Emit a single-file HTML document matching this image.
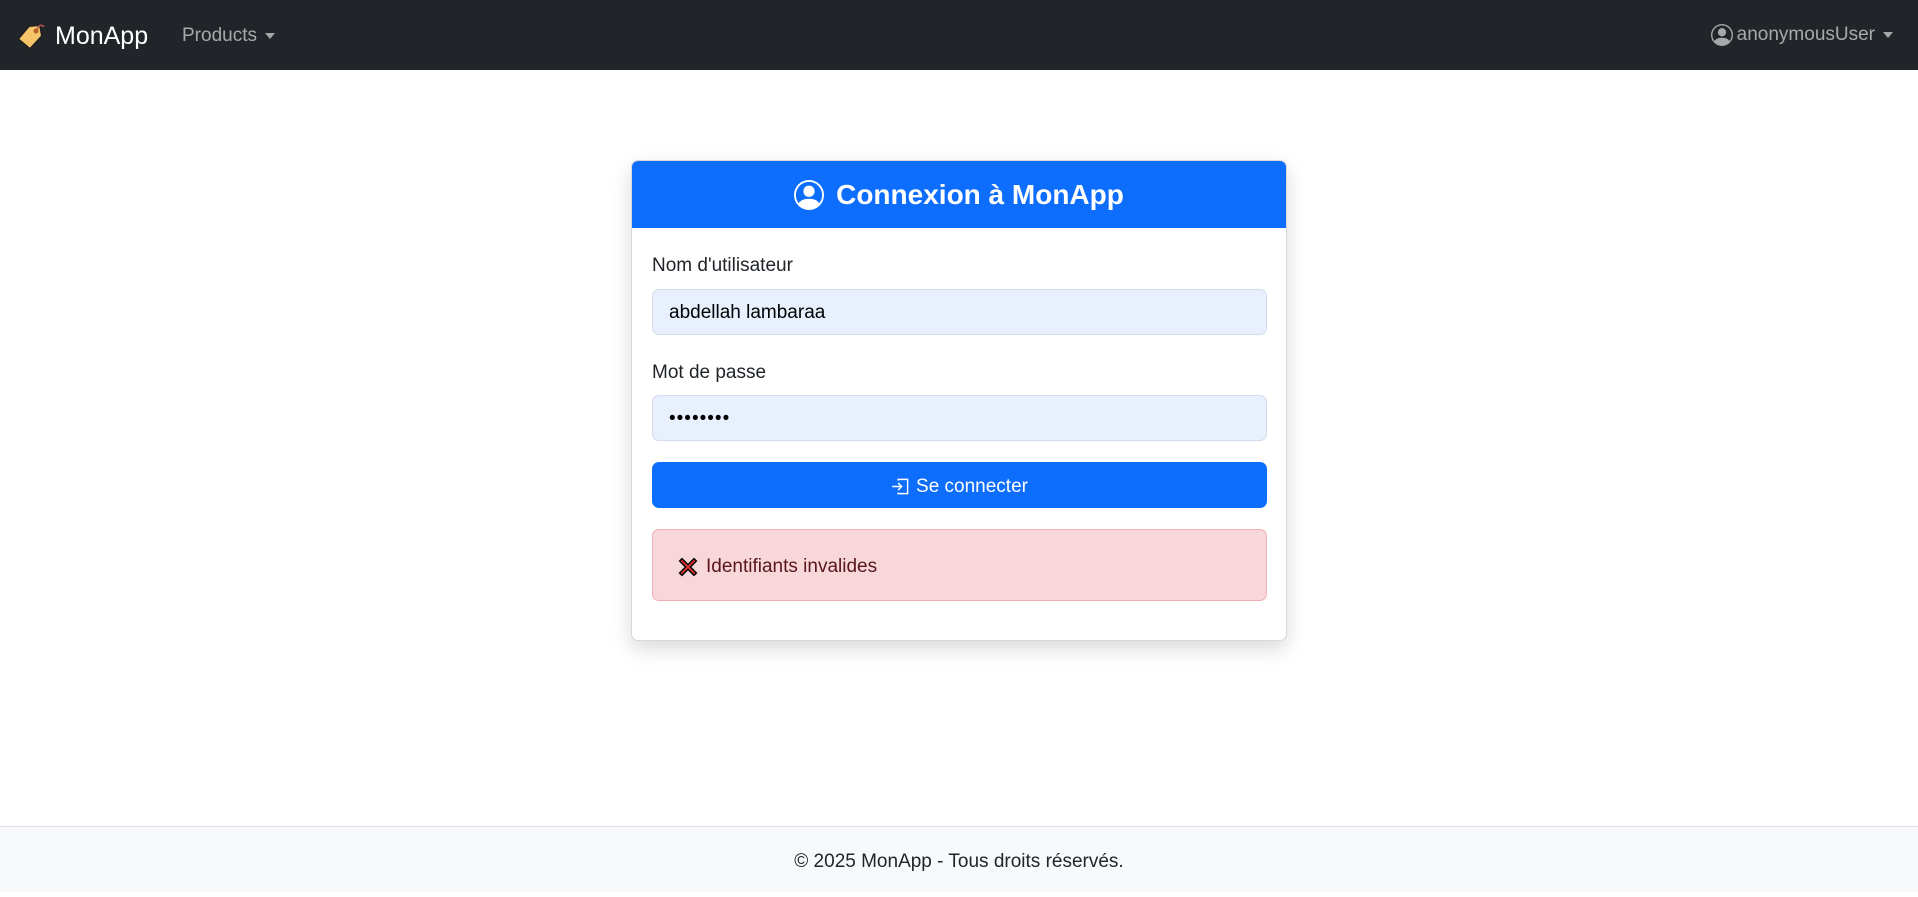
<!DOCTYPE html>
<html><head><meta charset="utf-8"><style>
*{box-sizing:border-box;margin:0;padding:0}
body{width:1918px;height:892px;font-family:"Liberation Sans",sans-serif;background:#fff;color:#212529;position:relative;overflow:hidden;font-size:19px}
.nav{position:absolute;top:0;left:0;width:1918px;height:70px;background:#212529}
.brand{position:absolute;left:16px;top:21px;color:#fff;font-size:25px;display:flex;align-items:center;gap:9px}
.prod{position:absolute;left:182px;top:25px;color:rgba(255,255,255,.6);font-size:19px}
.caret{display:inline-block;border-left:5px solid transparent;border-right:5px solid transparent;border-top:6px solid currentColor;vertical-align:middle;margin-left:8px}
.user{position:absolute;right:25px;top:24px;color:rgba(255,255,255,.6);font-size:19px;display:flex;align-items:center;gap:4px}
.user .caret{margin-left:4px}
.card{position:absolute;left:631px;top:160px;width:656px;height:481px;border:1px solid rgba(0,0,0,.15);border-radius:7px;box-shadow:0 8px 20px rgba(0,0,0,.15);overflow:hidden}
.hdr{height:67px;background:#0d6efd;color:#fff;font-weight:bold;font-size:28px;display:flex;align-items:center;justify-content:center;gap:12px;padding-top:1px}
.lbl{position:absolute;left:20px;font-size:19px}
.inp{position:absolute;left:20px;width:615px;height:46px;background:#e8f0fe;border:1px solid #d3dcea;border-radius:7px;padding-left:16px;line-height:46px;font-size:19px;color:#000}
.btn{position:absolute;left:20px;top:301px;width:615px;height:46px;background:#0d6efd;border-radius:7px;color:#fff;display:flex;align-items:center;justify-content:center;gap:6px;font-size:19px;padding-top:3px}
.alert{position:absolute;left:20px;top:368px;width:615px;height:72px;background:#f8d7da;border:1px solid #f1aeb5;border-radius:7px;color:#58151c;display:flex;align-items:center;padding-left:23px;gap:6px;font-size:19px;padding-top:3px}
.foot{position:absolute;left:0;top:826px;width:1918px;height:66px;background:#f8f9fa;border-top:1px solid #dee2e6;text-align:center;line-height:70px;font-size:19px}
</style></head><body>
<div class="nav">
<div class="brand"><svg width="30" height="30" viewBox="0 0 30 28"><path d="M2 17 L13 4 L24 3 L26 14 L14 27 Z" fill="#f6c56a" stroke="#222" stroke-width="2" stroke-linejoin="round"/><circle cx="20" cy="9" r="2.5" fill="#b5651d"/><path d="M20 9 Q24 0 28 5" stroke="#b55" fill="none" stroke-width="1.5"/></svg>MonApp</div>
<div class="prod">Products<span class="caret"></span></div>
<div class="user"><svg width="22" height="22" viewBox="0 0 16 16" fill="currentColor"><path d="M11 6a3 3 0 1 1-6 0 3 3 0 0 1 6 0z"/><path fill-rule="evenodd" d="M0 8a8 8 0 1 1 16 0A8 8 0 0 1 0 8zm8-7a7 7 0 0 0-5.468 11.37C3.242 11.226 4.805 10 8 10s4.757 1.225 5.468 2.37A7 7 0 0 0 8 1z"/></svg>anonymousUser<span class="caret"></span></div>
</div>
<div class="card">
<div class="hdr"><svg width="30" height="30" viewBox="0 0 16 16" fill="#fff"><path d="M11 6a3 3 0 1 1-6 0 3 3 0 0 1 6 0z"/><path fill-rule="evenodd" d="M0 8a8 8 0 1 1 16 0A8 8 0 0 1 0 8zm8-7a7 7 0 0 0-5.468 11.37C3.242 11.226 4.805 10 8 10s4.757 1.225 5.468 2.37A7 7 0 0 0 8 1z"/></svg>Connexion à MonApp</div>
<div class="lbl" style="top:94px">Nom d'utilisateur</div>
<div class="inp" style="top:128px">abdellah lambaraa</div>
<div class="lbl" style="top:201px">Mot de passe</div>
<div class="inp" style="top:234px;letter-spacing:1px">••••••••</div>
<div class="btn"><svg width="19" height="19" viewBox="0 0 16 16" fill="none" stroke="#fff" stroke-width="1.2"><path d="M6 3V2h8v12H6v-1"/><path d="M1 8h8M6 5l3 3-3 3"/></svg>Se connecter</div>
<div class="alert"><svg width="24" height="24" viewBox="0 0 20 20"><path d="M3 5L5 3 10 8 15 3 17 5 12 10 17 15 15 17 10 12 5 17 3 15 8 10Z" fill="#d9312b" stroke="#000" stroke-width="1.2"/></svg>Identifiants invalides</div>
</div>
<div class="foot">© 2025 MonApp - Tous droits réservés.</div>
</body></html>
